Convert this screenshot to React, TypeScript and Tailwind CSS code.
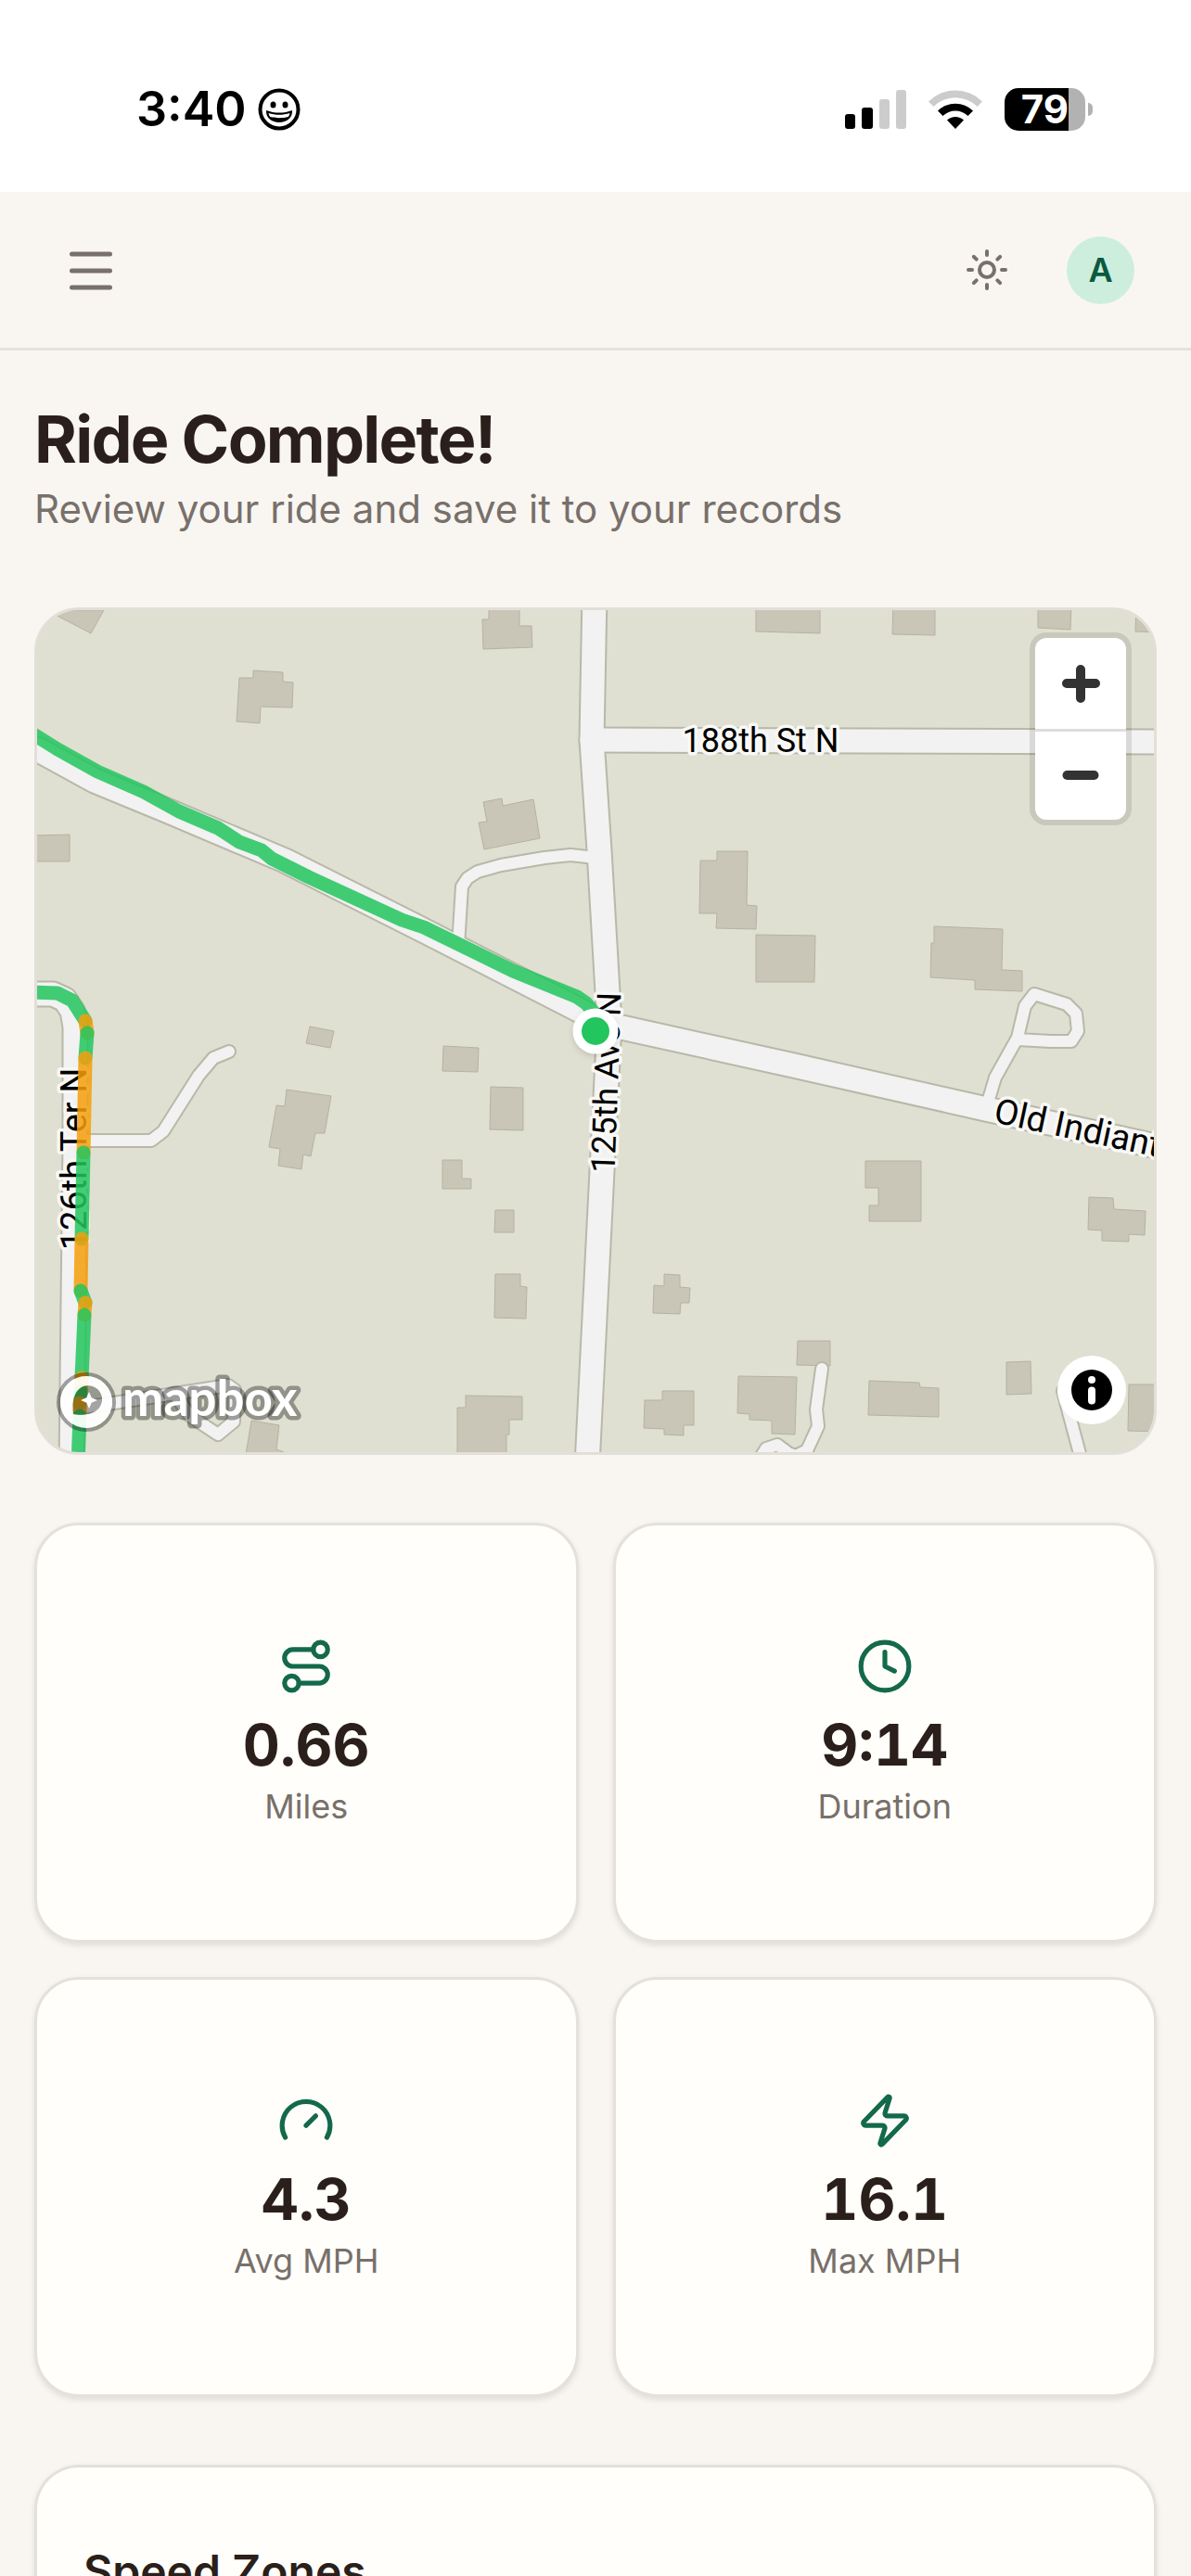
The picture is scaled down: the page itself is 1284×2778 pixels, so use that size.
import React from "react";
import { Clock, Gauge, Route, Sun, Zap } from "lucide-react";
import type { LucideIcon } from "lucide-react";

interface StatCardProps {
  icon: LucideIcon;
  value: string;
  label: string;
}

interface RouteSegment {
  color: string;
  points: string;
}

const GREEN = "#22c55e";
const ORANGE = "#f59e0b";

const roads = [
  "40,808 102,842 182,875 307,928 450,1000 620,1087 652,1104 860,1150 1063,1196 1260,1239",
  "641,640 638,798 646,917 657,1104 633,1580",
  "638,798 1260,800",
  "30,1072 57,1072 70,1078 78,1090 81,1107 81,1230 77,1580",
];

const driveways = [
  "645,926 633,924 615,922 587,925 540,933 515,940 504,947 498,956 494,1020",
  "81,1230 127,1230 163,1230 176,1220 214,1160 230,1141 247,1134",
  "1064,1192 1073,1162 1097,1119 1105,1085 1115,1072 1150,1083 1160,1093 1162,1112 1155,1123 1133,1123 1097,1121",
  "886,1476 880,1520 882,1538 870,1564 858,1570 850,1567 838,1558 826,1562 816,1578",
  "1146,1500 1152,1523 1166,1575",
  "82,1519 123,1513 246,1494 253,1499 252,1533 235,1547 205,1527 190,1506",
];

const buildings = [
  "50,658 98,683 112,658",
  "273,723 305,725 305,735 316,736 315,763 281,762 280,780 255,778 258,731 273,731",
  "36,901 75,900 75,929 36,929",
  "334,1107 360,1112 356,1130 330,1125",
  "527,650 560,650 560,675 573,675 574,698 521,700 520,668 527,668",
  "521,865 541,861 542,869 575,862 582,904 522,916 516,887 525,886",
  "773,918 806,918 805,976 816,977 815,1002 772,1001 773,985 754,985 755,928 773,928",
  "815,1008 879,1009 878,1059 815,1059",
  "815,650 815,681 884,683 884,650",
  "963,650 1008,650 1008,685 962,684",
  "1119,650 1155,650 1154,679 1119,677",
  "1225,650 1224,681 1250,682 1250,650",
  "1007,999 1081,1002 1080,1046 1102,1047 1102,1069 1051,1067 1051,1057 1003,1054 1004,1017 1007,1017",
  "309,1175 357,1182 350,1222 340,1222 335,1247 327,1245 325,1261 300,1257 302,1239 290,1237 298,1192 307,1193",
  "271,1532 301,1537 298,1563 306,1566 306,1575 264,1575",
  "478,1128 516,1130 515,1156 477,1155",
  "529,1172 564,1173 564,1219 528,1218",
  "477,1251 498,1251 498,1271 508,1271 508,1282 477,1282",
  "534,1305 554,1305 554,1329 533,1329",
  "534,1374 561,1374 561,1387 568,1388 567,1422 533,1421",
  "716,1374 733,1375 733,1388 744,1389 743,1405 734,1405 733,1417 704,1416 705,1386 716,1387",
  "502,1505 563,1506 563,1531 549,1531 549,1547 546,1547 546,1575 493,1575 493,1518 502,1518",
  "714,1500 748,1500 748,1537 737,1537 737,1548 716,1547 716,1541 694,1540 695,1510 714,1510",
  "796,1484 859,1485 857,1547 832,1546 832,1532 808,1531 808,1525 795,1524",
  "860,1446 895,1446 895,1473 859,1472",
  "933,1252 993,1252 993,1317 937,1317 937,1300 947,1300 947,1281 933,1281",
  "1174,1291 1200,1292 1201,1304 1235,1306 1234,1332 1217,1331 1217,1339 1188,1338 1188,1327 1173,1326",
  "937,1489 991,1491 992,1496 1012,1497 1012,1528 936,1526",
  "1085,1469 1111,1468 1112,1503 1085,1504",
  "1217,1493 1250,1493 1250,1544 1216,1543",
];

const segments: RouteSegment[] = [
  {
    color: GREEN,
    points:
      "30,788 62,808 105,832 155,854 193,875 235,893 258,908 282,917 293,926 333,946 433,992 457,1000 553,1047 622,1075 632,1082 642,1094 642,1112",
  },
  { color: GREEN, points: "30,1070 62,1071 78,1079 92,1101" },
  { color: ORANGE, points: "92,1101 94,1114" },
  { color: GREEN, points: "94,1114 92,1141" },
  { color: ORANGE, points: "92,1141 90,1243" },
  { color: GREEN, points: "90,1243 88,1336" },
  { color: ORANGE, points: "88,1336 87,1392" },
  { color: GREEN, points: "87,1392 92,1405" },
  { color: ORANGE, points: "92,1405 91,1418" },
  { color: GREEN, points: "91,1418 88,1486" },
  { color: ORANGE, points: "88,1486 87,1500" },
  { color: GREEN, points: "87,1500 86,1513" },
  { color: ORANGE, points: "86,1513 86,1527" },
  { color: GREEN, points: "86,1527 84,1580" },
];

const stats: StatCardProps[] = [
  { icon: Route, value: "0.66", label: "Miles" },
  { icon: Clock, value: "9:14", label: "Duration" },
  { icon: Gauge, value: "4.3", label: "Avg MPH" },
  { icon: Zap, value: "16.1", label: "Max MPH" },
];

const StatusBar: React.FC = () => (
  <div className="flex h-[207px] shrink-0 items-center justify-between bg-white pt-7 pr-[106px] pl-[147px] text-black">
    <div className="flex items-center gap-3">
      <span className="text-[52px] leading-none font-semibold">3:40</span>
      <svg className="size-[46px]" viewBox="0 0 46 46" fill="none">
        <circle cx="23" cy="23" r="20.5" stroke="currentColor" strokeWidth="4" />
        <ellipse cx="16.5" cy="18" rx="3" ry="3.6" fill="currentColor" />
        <ellipse cx="29.5" cy="18" rx="3" ry="3.6" fill="currentColor" />
        <path
          d="M9 24c9 3.400 19 3.400 28 0c.6 8-6 13-14 13S8.400 32 9 24z"
          fill="currentColor"
        />
        <path d="M11.500 27c7.500 2.400 15.500 2.400 23 0c-.4 2-1 3-1.800 4c-6 1.600-13.400 1.600-19.400 0c-.8-1-1.400-2-1.800-4z" fill="#fff" />
      </svg>
    </div>

    <div className="flex items-center gap-6">
      <svg className="h-[42px] w-[66px]" viewBox="0 0 66 42">
        <rect x="0" y="26" width="11" height="16" rx="3" />
        <rect x="18" y="19" width="12" height="23" rx="3" />
        <rect x="37" y="10" width="11" height="32" rx="3" fill="#ccc" />
        <rect x="55" y="0" width="11" height="42" rx="3" fill="#ccc" />
      </svg>
      <svg className="h-[43px] w-[58px]" viewBox="0 0 58 43">
        <path d="M0 13.500a41 41 0 0 1 58 0l-5.500 5.500a33.500 33.500 0 0 0-47 0z" fill="#ccc" />
        <path d="M10 23.500a27 27 0 0 1 38 0l-5.500 5.500a19.500 19.500 0 0 0-27 0z" />
        <path d="M20 33.500a13 13 0 0 1 18 0l-9 9.500z" />
      </svg>
      <div className="flex items-center gap-[3px]">
        <div className="flex h-[46px] w-[87px] items-center justify-center rounded-[15px] bg-linear-to-r from-black from-79% to-[#b2b2b2] to-79% text-[42px] leading-none font-bold text-white">
          79
        </div>
        <div className="h-[14px] w-[5px] rounded-r-full bg-[#b2b2b2]" />
      </div>
    </div>
  </div>
);

const Header: React.FC = () => (
  <header className="flex h-[171px] shrink-0 items-center justify-between border-b-[3px] border-[#e5e1dc] pr-[61px] pl-[68px]">
    <button type="button" aria-label="Open menu" className="text-[#78706a]">
      <svg className="size-[60px]" viewBox="0 0 60 60" fill="none">
        <path
          d="M9.500 13h41M9.500 31h41M9.500 49h41"
          stroke="currentColor"
          strokeWidth="5"
          strokeLinecap="round"
        />
      </svg>
    </button>

    <div className="flex items-center gap-[62px]">
      <button type="button" aria-label="Toggle theme" className="text-[#78706a]">
        <Sun className="size-12" />
      </button>
      <button
        type="button"
        aria-label="Account"
        className="flex size-[73px] items-center justify-center rounded-full bg-[#cdeedd] text-[36px] leading-none font-semibold text-[#0b5a40]"
      >
        A
      </button>
    </div>
  </header>
);

const MapLabels: React.FC = () => (
  <g
    fontFamily="Roboto, sans-serif"
    fill="#000"
    stroke="#f8f8f6"
    strokeWidth="7"
    strokeLinejoin="round"
    paintOrder="stroke"
  >
    <text x="820" y="811" textAnchor="middle" className="text-[36px]">
      188th St N
    </text>
    <text transform="translate(93 1250) rotate(-90)" textAnchor="middle" className="text-[38px]">
      126th Ter N
    </text>
    <text transform="translate(666 1168) rotate(-88)" textAnchor="middle" className="text-[36px]">
      125th Ave N
    </text>
    <text transform="translate(1070 1210) rotate(12)" className="text-[38px]">
      Old Indiantown
    </text>
  </g>
);

const MapboxLogo: React.FC = () => (
  <g>
    <circle cx="93" cy="1512" r="30" fill="none" stroke="#000" strokeOpacity="0.35" strokeWidth="4" />
    <path
      d="M93 1484a28 28 0 1 1 0 56a28 28 0 1 1 0-56zM79 1525c6 1.500 16 1 22-2a15 15 0 1 0-20-19c-3 6-3 15-2 21z"
      fill="#fff"
      fillOpacity="0.92"
      fillRule="evenodd"
    />
    <path d="M79 1525c6 1.500 16 1 22-2a15 15 0 1 0-20-19c-3 6-3 15-2 21z" fill="#000" fillOpacity="0.32" />
    <path d="M96 1501l2.700 6.300l6.300 2.700l-6.300 2.700l-2.700 6.300l-2.700-6.300l-6.300-2.700l6.300-2.700z" fill="#fff" />
    <text
      x="132"
      y="1527"
      className="text-[53px] font-bold"
      fontFamily="Lato, sans-serif"
      fill="#fff"
      stroke="#000"
      strokeOpacity="0.35"
      strokeWidth="9"
      strokeLinejoin="round"
      paintOrder="stroke"
    >
      mapbox
    </text>
  </g>
);

const RideMap: React.FC = () => (
  <section
    aria-label="Ride map"
    className="relative aspect-[1210/914] w-full shrink-0 overflow-hidden rounded-[48px] border-[3px] border-[#e2dfd9] bg-[#dfe0d1]"
  >
    <svg
      className="block size-full"
      viewBox="40 658 1204 908"
      preserveAspectRatio="xMidYMid slice"
      fill="none"
      strokeLinejoin="round"
    >
      <g fill="#cac6b7" stroke="#b5b2a1" strokeWidth="1">
        {buildings.map((points) => (
          <polygon key={points} points={points} strokeLinejoin="miter" />
        ))}
      </g>

      {/* casings first so that the junctions stay open */}
      <g stroke="#b9b8a8" strokeLinecap="round">
        {driveways.map((points) => (
          <polyline key={points} points={points} strokeWidth="16" />
        ))}
        {roads.map((points) => (
          <polyline key={points} points={points} strokeWidth="29" />
        ))}
      </g>
      <g stroke="#f2f2f2" strokeLinecap="round">
        {driveways.map((points) => (
          <polyline key={points} points={points} strokeWidth="12" />
        ))}
        {roads.map((points) => (
          <polyline key={points} points={points} strokeWidth="25" />
        ))}
      </g>

      <MapLabels />

      {segments.map(({ color, points }) => (
        <polyline
          key={points}
          points={points}
          stroke={color}
          strokeOpacity="0.85"
          strokeWidth="15"
          strokeLinecap="round"
        />
      ))}

      <g className="drop-shadow-md">
        <circle cx="642" cy="1112" r="24.500" fill="#fff" />
        <circle cx="642" cy="1112" r="15" fill={GREEN} />
      </g>

      <MapboxLogo />
    </svg>

    <div className="absolute top-[30px] right-[30px] flex flex-col rounded-xl bg-white text-[#333] ring-6 ring-black/10">
      <button type="button" aria-label="Zoom in" className="size-[98px]">
        <svg viewBox="0 0 98 98">
          <path d="M49 34v31M34 49h31" stroke="currentColor" strokeWidth="10" strokeLinecap="round" />
        </svg>
      </button>
      <button type="button" aria-label="Zoom out" className="size-[98px] border-t-[3px] border-[#ddd]">
        <svg viewBox="0 0 98 98">
          <path d="M34.500 47h29" stroke="currentColor" strokeWidth="10" strokeLinecap="round" />
        </svg>
      </button>
    </div>

    <button type="button" aria-label="Map attribution" className="absolute right-[30px] bottom-[30px] size-[74px] rounded-full bg-white">
      <svg viewBox="0 0 74 74">
        <circle cx="37" cy="37" r="22" />
        <circle cx="37" cy="26" r="4" fill="#fff" />
        <path d="M37 37.500v11" stroke="#fff" strokeWidth="8" strokeLinecap="round" />
      </svg>
    </button>
  </section>
);

const StatCard: React.FC<StatCardProps> = ({ icon: Icon, value, label }) => (
  <div className="flex h-[453px] flex-col items-center justify-center rounded-[48px] border-[3px] border-[#e4e1dc] bg-[#fffefa] pt-1 shadow-[0_3px_6px_rgba(0,0,0,0.1)]">
    <Icon className="mb-4 size-[62px] text-[#14694c]" />
    <p className="text-[62px] leading-[76px] font-bold text-[#2a1f1a] tabular-nums">{value}</p>
    <p className="text-[36px] leading-[56px] text-[#78706a]">{label}</p>
  </div>
);

const App: React.FC = () => {
  return (
    <div className="flex h-screen flex-col overflow-hidden bg-[#f9f6f2] font-['Inter',sans-serif]">
      <StatusBar />
      <Header />

      <main className="flex min-h-0 flex-1 flex-col gap-[73px] overflow-hidden px-[37px] pt-[54px]">
        <div className="shrink-0">
          <h1 className="text-[70px] leading-[84px] font-bold tracking-tight text-[#2a1f1a]">Ride Complete!</h1>
          <p className="text-[42px] leading-[66px] text-[#78706a]">Review your ride and save it to your records</p>
        </div>

        <RideMap />

        <div className="grid shrink-0 grid-cols-2 gap-[37px]">
          {stats.map((stat) => (
            <StatCard key={stat.label} {...stat} />
          ))}
        </div>

        <section className="shrink-0 rounded-t-[48px] border-[3px] border-b-0 border-[#e4e1dc] bg-[#fffefa] px-[50px] pt-[82px] shadow-[0_3px_6px_rgba(0,0,0,0.1)]">
          <h2 className="text-[48px] leading-[60px] font-semibold text-[#2a1f1a]">Speed Zones</h2>
        </section>
      </main>
    </div>
  );
};

export default App;
